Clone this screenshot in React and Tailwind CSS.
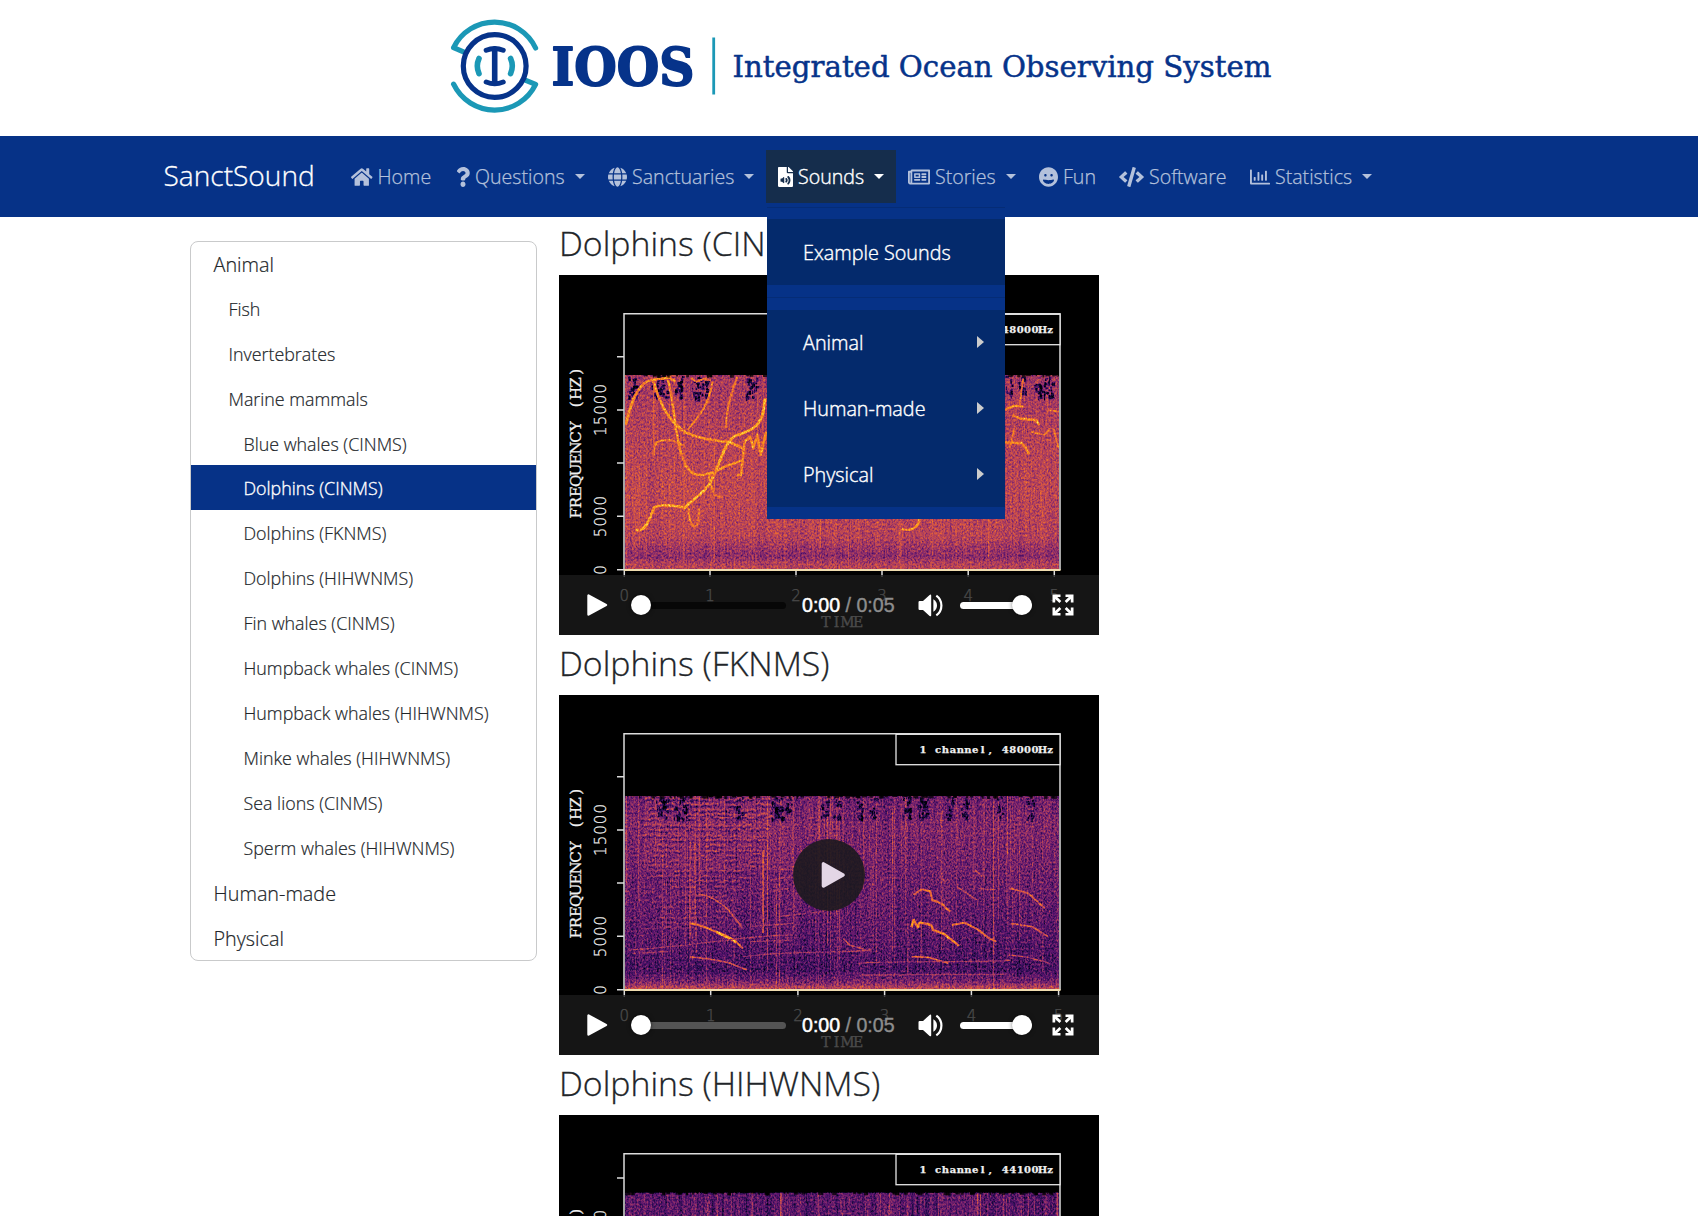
import React from "react";
import {
  FaHome,
  FaQuestion,
  FaGlobe,
  FaFileAudio,
  FaRegNewspaper,
  FaGrin,
  FaCode,
  FaRegChartBar,
} from "react-icons/fa";

const NAV = [
  { label: "Home", Icon: FaHome, width: "w-[105px]", icon: "w-[21.5px] h-[20px]" },
  { label: "Questions", Icon: FaQuestion, width: "w-[152px]", icon: "w-[14px] h-[20px]", caret: true },
  { label: "Sanctuaries", Icon: FaGlobe, width: "w-[170px]", icon: "w-[19px] h-[20px]", caret: true },
  { label: "Sounds", Icon: FaFileAudio, width: "w-[130px]", icon: "w-[15px] h-[20px]", caret: true, active: true },
  { label: "Stories", Icon: FaRegNewspaper, width: "w-[131px]", icon: "w-[22px] h-[20px]", caret: true },
  { label: "Fun", Icon: FaGrin, width: "w-[80px]", icon: "w-[19px] h-[20px]" },
  { label: "Software", Icon: FaCode, width: "w-[131px]", icon: "w-[25px] h-[20px]" },
  { label: "Statistics", Icon: FaRegChartBar, width: "w-[146px]", icon: "w-[20px] h-[20px]", caret: true },
];

const SIDEBAR = [
  ["Animal", 0],
  ["Fish", 1],
  ["Invertebrates", 1],
  ["Marine mammals", 1],
  ["Blue whales (CINMS)", 2],
  ["Dolphins (CINMS)", 2, true],
  ["Dolphins (FKNMS)", 2],
  ["Dolphins (HIHWNMS)", 2],
  ["Fin whales (CINMS)", 2],
  ["Humpback whales (CINMS)", 2],
  ["Humpback whales (HIHWNMS)", 2],
  ["Minke whales (HIHWNMS)", 2],
  ["Sea lions (CINMS)", 2],
  ["Sperm whales (HIHWNMS)", 2],
  ["Human-made", 0],
  ["Physical", 0],
];

const LEVEL = [
  "pl-[22.5px] text-[19.8px]",
  "pl-[37.5px] text-[17.85px]",
  "pl-[52.5px] text-[17.85px]",
];

function Logo() {
  return (
    <svg width="840" height="136" viewBox="440 0 840 136" className="block" fill="none">
      <g stroke="#1b98b6" strokeWidth="5.2" strokeLinecap="round" strokeLinejoin="round">
        <path d="M463.5 51.8L453.6 47.6A45.5 45.5 0 0 1 535.6 48" />
        <path d="M525.8 80.4L535.6 84.4A45.5 45.5 0 0 1 453.6 84.2" />
        <path d="M479 58.5Q475.6 66 479 73.6M510.6 58.5Q514 66 510.6 73.6" strokeWidth="5.6" />
      </g>
      <g stroke="#06338a" strokeLinecap="round">
        <circle cx="494.7" cy="66" r="31.4" strokeWidth="5.2" />
        <path d="M494.7 49V83" strokeWidth="5.6" />
        <path d="M486.2 50.2Q494.7 46.6 503.2 50.2M486.2 82Q494.7 85.6 503.2 82" strokeWidth="5" />
      </g>
      <path d="M713.7 37.5V94.5" stroke="#1b98b6" strokeWidth="2.8" />
      <g fill="#06338a" stroke="#06338a" fontFamily='"DejaVu Serif", serif' strokeLinejoin="round">
        <text x="551.5" y="85.3" fontSize="53" fontWeight="700" strokeWidth="1.8" textLength="143" lengthAdjust="spacingAndGlyphs">IOOS</text>
        <text x="732.5" y="76.7" fontSize="29" strokeWidth="0.5" textLength="539" lengthAdjust="spacingAndGlyphs">Integrated Ocean Observing System</text>
      </g>
    </svg>
  );
}

/* Deterministic pseudo random numbers, so that a plot always looks the same. */
function prng(seed) {
  let s = seed;
  return () => {
    s = (s * 1664525 + 1013904223) % 4294967296;
    return s / 4294967296;
  };
}

const gray = (v) => {
  const c = Math.round(Math.max(0, Math.min(1, v)) * 255);
  return `rgb(${c},${c},${c})`;
};

const WHISTLES_A = [
  ["M212 630C225 570 245 500 285 495L335 487L350 500", 0.77, 8],
  ["M290 500C305 560 330 620 380 652C420 672 460 675 505 682L540 700", 0.78, 8],
  ["M240 945C275 950 280 900 292 878C310 865 350 872 378 878C400 850 440 830 455 790C480 730 490 680 520 662C550 650 580 645 595 600L603 550", 0.83, 8],
  ["M330 495C350 560 350 740 400 775C430 790 460 770 490 755L540 735", 0.77, 7],
  ["M455 500C445 570 420 600 385 645", 0.72, 6],
  ["M290 720C290 680 300 673 340 676L375 692", 0.74, 6],
  ["M525 485C505 540 495 580 492 640M395 490L410 500L430 492L450 496", 0.72, 6],
  ["M388 880C392 950 410 940 415 920L418 880M440 770L460 840L480 845", 0.72, 6],
  ["M525 780L535 780L545 680L560 665L570 700L580 660L590 720L605 650", 0.76, 7],
  ["M1274 585L1300 572L1325 575M1295 600L1320 612L1360 615L1370 630M1274 682L1320 684Q1335 700 1342 718", 0.77, 7],
  ["M1345 650L1385 660L1400 640M1395 585L1425 590M1300 640L1288 700M1325 490L1315 570M1410 640L1424 700", 0.7, 5],
  ["M985 942C1010 950 1030 940 1035 912", 0.8, 7],
  ["M250 760V990M375 500V1040M980 912V1050M835 960V1050M757 912V1000M1228 912V1030M460 640V1040M290 500V730M215 640V1050", 0.6, 3],
];

const WHISTLES_B = [
  ["M392 850C440 858 470 880 500 892S525 915 540 925", 0.7, 6],
  ["M465 876C485 885 510 896 522 908", 0.8, 8],
  ["M392 950L450 958L500 968L552 990M415 762C450 765 480 790 500 810L540 865", 0.58, 5],
  ["M1018 765L1040 748L1065 754L1070 780L1095 790L1120 815", 0.66, 6],
  ["M1012 862L1018 840L1030 862L1035 848L1068 855L1072 870L1100 880L1125 900L1145 918", 0.75, 7],
  ["M1125 855L1160 848L1200 870L1225 892L1250 905", 0.68, 6],
  ["M1290 745L1340 760L1385 805M1290 850L1350 860L1395 890", 0.62, 5],
  ["M1012 950L1060 952L1115 970", 0.68, 5],
  ["M820 895L840 915L885 930M1090 705L1110 730M1185 685L1210 710M1140 740L1195 780M1285 945L1340 952L1400 970M1200 745L1245 750", 0.54, 4],
  ["M597 630V880", 0.6, 5],
  ["M682 470V880M1315 470V900M418 470V760M700 480V800M905 640V930M1215 480V720M1002 850V1020M410 830V940M1187 480V760M1380 880V1000", 0.46, 3],
  ["M220 930C400 920 500 890 680 885M540 950C700 930 800 940 900 930M860 970C1000 960 1200 970 1290 960M870 1005L1275 1003M640 830L760 815L820 790M560 905L680 900M230 940L330 935M560 860L680 850M620 720L680 710M620 750L670 745M640 690L680 688", 0.45, 4],
];

const PLOTS = {
  a: {
    seed: 11, top: 100, ticksY: [81.7, 135, 188, 241.3, 294.7], ticksX: [65.3, 151, 237, 323, 409.2, 495.3],
    stops: [[0, 0.44], [0.25, 0.48], [0.6, 0.51], [0.83, 0.49], [0.93, 0.38], [0.97, 0.48], [1, 0.5]],
    whistles: WHISTLES_A, shift: -60, streak: 0.03, grain: 0.5, comb: 0.16, label: "1 channel, 48000Hz",
    clusters: [72, 75, 95, 100, 105, 119, 122, 136, 140, 146, 190, 194, 450, 462, 478, 484, 487, 490],
  },
  b: {
    seed: 5, top: 101, ticksY: [81.7, 135, 188, 241.3, 294.7], ticksX: [65.3, 151.7, 238.9, 325.6, 412.4, 499.6],
    stops: [[0, 0.31], [0.15, 0.35], [0.5, 0.3], [0.75, 0.26], [0.9, 0.22], [0.96, 0.34], [0.99, 0.5], [1, 0.5]],
    whistles: WHISTLES_B, shift: -55, streak: 0.09, grain: 0.56, comb: 0.18, harmonics: true, label: "1 channel, 48000Hz",
    clusters: [100, 106, 118, 124, 180, 214, 218, 224, 229, 265, 277, 300, 314, 347, 350, 361, 366, 390, 405, 440, 470],
  },
  c: {
    seed: 23, top: 77.5, ticksY: [63, 121], ticksX: [],
    stops: [[0, 0.27], [1, 0.25]],
    whistles: [], shift: -65, streak: 0.1, grain: 0.5, comb: 0.26, clusters: [], label: "1 channel, 44100Hz",
  },
};

/* Text whose glyphs are centred in equal cells, as in a fixed-pitch face. */
function CellText({ x, y, pitch, children, rotate, ...rest }) {
  const xs = [...children].map((_, i) => (i + 0.5) * pitch - (children.length * pitch) / 2);
  return (
    <text x={xs.join(" ")} y="0" textAnchor="middle" transform={`translate(${x} ${y})${rotate ? " rotate(-90)" : ""}`} {...rest}>
      {children}
    </text>
  );
}

function Spectrogram({ id }) {
  const p = PLOTS[id];
  const rnd = prng(p.seed);
  const bottom = 295;
  const bandH = bottom - p.top;
  const streaks = Array.from({ length: 130 }, () => ({
    x: Math.round(66 + rnd() * 433),
    y: p.top + (rnd() < 0.6 ? 0 : rnd() * bandH * 0.6),
    h: bandH * (0.3 + rnd() * 0.7),
    light: rnd() < 0.6,
    o: rnd() * p.streak * 2.4,
  }));
  const patches = p.clusters.flatMap((cx) =>
    Array.from({ length: 11 }, () => ({
      x: cx + (rnd() - 0.5) * 7,
      y: p.top + Math.pow(rnd(), 0.8) * 22,
      w: 1 + rnd() * 2.4,
      h: 1.5 + rnd() * 3.5,
    }))
  );
  const edge = Array.from({ length: 110 }, () => ({ x: 66 + rnd() * 433, y: p.top - 1, w: 1 + rnd() * 4, h: 1 + rnd() * 3 }));
  const waves = p.harmonics
    ? Array.from({ length: 26 }, (_, i) => {
        const y = 104 + i * 5.2;
        const start = 78 + rnd() * 20;
        let d = `M${start} ${y}`;
        for (let x = start; x < 222 - i * 2.5; x += 9) {
          d += rnd() < 0.25 ? `m9 ${rnd() * 2 - 1}` : `q${3 + rnd() * 3} ${-1 - rnd() * 3} 9 ${rnd() - 0.5}`;
        }
        return d;
      })
    : [];
  const digits = { fontFamily: '"DejaVu Sans", sans-serif', fontSize: 15, fill: "#f0f0f0", stroke: "#f0f0f0", strokeWidth: 0.25 };
  const slab = { fontFamily: '"DejaVu Serif", serif', fontSize: 15.2, fill: "#f0f0f0", stroke: "#f0f0f0", strokeWidth: 0.25 };
  return (
    <svg width="540" height="360" viewBox="0 0 540 360" className="block bg-black">
      <defs>
        <linearGradient id={`g-${id}`} x1="0" y1="0" x2="0" y2="1">
          {p.stops.map(([o, v]) => (
            <stop key={o} offset={o} stopColor={gray(v)} />
          ))}
        </linearGradient>
        <filter id={`f-${id}`} filterUnits="userSpaceOnUse" x="66" y={p.top} width="434" height={bandH} colorInterpolationFilters="sRGB">
          <feTurbulence type="fractalNoise" baseFrequency="0.6 0.45" numOctaves="3" seed={p.seed} result="t1" />
          <feColorMatrix in="t1" type="matrix" values="1 0 0 0 0  1 0 0 0 0  1 0 0 0 0  0 0 0 0 1" result="n1" />
          <feTurbulence type="fractalNoise" baseFrequency="0.4 0.006" numOctaves="2" seed={p.seed + 3} result="t2" />
          <feColorMatrix in="t2" type="matrix" values="1 0 0 0 0  1 0 0 0 0  1 0 0 0 0  0 0 0 0 1" result="n2" />
          <feComposite in="SourceGraphic" in2="n1" operator="arithmetic" k1="0" k2="1" k3={p.grain} k4={-p.grain / 2} result="s1" />
          <feComposite in="s1" in2="n2" operator="arithmetic" k1="0" k2="1" k3={p.comb} k4={-p.comb / 2} result="s2" />
          <feComponentTransfer in="s2">
            <feFuncR type="table" tableValues="0 0.12 0.32 0.53 0.73 0.89 0.98 0.98 0.99" />
            <feFuncG type="table" tableValues="0 0.05 0.07 0.17 0.27 0.38 0.56 0.79 1" />
            <feFuncB type="table" tableValues="0.02 0.28 0.42 0.42 0.34 0.22 0.1 0.2 0.64" />
          </feComponentTransfer>
        </filter>
        <clipPath id={`c-${id}`}>
          <rect x="66" y={p.top} width="434" height={bandH} />
        </clipPath>
      </defs>
      <g filter={`url(#f-${id})`}>
        <g clipPath={`url(#c-${id})`}>
          <rect x="66" y={p.top} width="434" height={bandH} fill={`url(#g-${id})`} />
          {p.harmonics && <rect x="85" y={p.top} width="150" height="75" fill="#fff" opacity="0.05" />}
          {streaks.map((s, i) => (
            <rect key={i} x={s.x} y={s.y} width="1" height={s.h} fill={s.light ? "#fff" : "#000"} opacity={s.o} />
          ))}
          {waves.map((d, i) => (
            <g key={i} fill="none" strokeWidth="1.3">
              <path d={d} stroke="#858585" opacity={0.8 - i * 0.015} />
              <path d={d} stroke="#000" opacity={0.4 - i * 0.014} transform="translate(0 2.4)" />
            </g>
          ))}
          {patches.map((s, i) => (
            <rect key={i} x={s.x} y={s.y} width={s.w} height={s.h} fill="#000" opacity="0.75" />
          ))}
          <g transform={`translate(-9 ${p.shift}) scale(0.35714 0.33333)`} fill="none" strokeLinejoin="round">
            {p.whistles.map(([d, v, w]) => (
              <path key={d} d={d} stroke={gray(v)} strokeWidth={w} opacity="0.9" />
            ))}
          </g>
        </g>
      </g>
      {edge.map((s, i) => (
        <rect key={i} x={s.x} y={s.y} width={s.w} height={s.h} fill="#000" opacity="0.75" />
      ))}
      <path d={`M65 ${bottom}V38.7H501V${bottom}`} stroke="#dcdcdc" strokeWidth="1.5" fill="none" />
      <path d="M64.5 295H501.5" stroke="#efdcae" strokeWidth="1.8" />
      <path
        d={p.ticksY.map((y) => `M58 ${y}H65`).join("") + p.ticksX.map((x) => `M${x} 296V302`).join("")}
        stroke="#dcdcdc"
        strokeWidth="1.5"
      />
      <rect x="337" y="39.3" width="164" height="30.4" fill="#000" stroke="#e6e6e6" strokeWidth="1.3" />
      <CellText x={427.5} y={58} pitch={7.47} {...slab} fontSize={10} fontWeight={700}>{p.label}</CellText>
      <CellText x={22.2} y={167.5} pitch={10.9} rotate {...slab}>FREQUENCY (HZ)</CellText>
      <CellText x={47.2} y={id === "c" ? 121 : 135} pitch={10.6} rotate {...digits}>15000</CellText>
      <CellText x={47.2} y={241.5} pitch={10.6} rotate {...digits}>5000</CellText>
      <CellText x={47.2} y={295} pitch={10.6} rotate {...digits}>0</CellText>
      {p.ticksX.map((x, i) => (
        <text key={i} x={x} y="325.5" textAnchor="middle" {...digits}>{i}</text>
      ))}
      <CellText x={283} y={351.5} pitch={10.8} {...slab} fontSize={14}>TIME</CellText>
    </svg>
  );
}

function Controls({ light }) {
  return (
    <div className="absolute bottom-0 left-0 flex h-[60px] w-[540px] items-center bg-[#1b1b1b]/78 pl-[28px]">
      <svg width="21" height="22" viewBox="0 0 21 22" className="shrink-0">
        <path d="M1.5 1.5V20.5L19 11Z" fill="#fff" stroke="#fff" strokeWidth="2.4" strokeLinejoin="round" />
      </svg>
      <div className={`ml-[23px] flex h-[7px] w-[155px] shrink-0 items-center rounded-full ${light ? "bg-[#545454]" : "bg-[#070707]"}`}>
        <div className="h-5 w-5 rounded-full bg-white shadow-[0_0_4px_rgba(0,0,0,0.6)]" />
      </div>
      <div className="ml-4 w-[94px] shrink-0 whitespace-pre pt-px font-['Liberation_Sans',sans-serif] text-[19.6px] leading-none text-[#8d8d8d]">
        <span className="text-white [-webkit-text-stroke:0.5px_white]">0:00</span>
        <span className="[-webkit-text-stroke:0.4px_#8d8d8d]"> / 0:05</span>
      </div>
      <svg width="25" height="23" viewBox="0 0 25 23" className="ml-[22px] shrink-0" fill="none">
        <path d="M0.5 8.2Q0.5 7 1.6 7H5L11.6 0.9Q13.2 0 13.2 1.8V21.2Q13.2 23 11.6 22L5 16H1.6Q0.5 16 0.5 14.8Z" fill="#fff" />
        <path d="M15.4 5.3Q19 7.6 19 11.5T15.4 17.7Z" fill="#fff" />
        <path d="M18.3 1.6Q23.4 5.2 23.4 11.5T18.3 21.4" stroke="#fff" strokeWidth="2.2" />
      </svg>
      <div className="ml-[17px] flex h-[7px] w-[72px] shrink-0 items-center justify-end rounded-full bg-white">
        <div className="h-5 w-5 rounded-full bg-white shadow-[0_0_4px_rgba(0,0,0,0.5)]" />
      </div>
      <svg width="22" height="22" viewBox="0 0 22 22" className="ml-5 shrink-0" fill="#fff">
        {["", "translate(22 0) scale(-1 1)", "translate(0 22) scale(1 -1)", "translate(22 22) scale(-1 -1)"].map((t) => (
          <g key={t} transform={t}>
            <path d="M0.5 0.5H8.5V3H5.2L9.3 7.1L7.4 9L3.2 4.9V8.5H0.5Z" />
          </g>
        ))}
      </svg>
    </div>
  );
}

function Video({ title, id, light, big }) {
  return (
    <section className="h-[420px]">
      <h2 className="flex h-[60px] items-center whitespace-nowrap pb-[3px] text-[33.8px] font-light leading-none [-webkit-text-stroke:0.3px_#212529]">{title}</h2>
      <div className="relative h-[360px] w-[540px] overflow-hidden">
        <Spectrogram id={id} />
        {big && (
          <div className="absolute left-[234px] top-[144px] flex h-[72px] w-[72px] items-center justify-center rounded-full bg-[#1c1a1e]/90">
            <svg width="26" height="28" viewBox="0 0 26 28" className="ml-[8px]">
              <path d="M3.5 3V25L23 14Z" fill="#e3d6e6" stroke="#e3d6e6" strokeWidth="3.6" strokeLinejoin="round" />
            </svg>
          </div>
        )}
        {id !== "c" && <Controls light={light} />}
      </div>
    </section>
  );
}

function Dropdown() {
  return (
    <div className="absolute left-[1px] top-[57px] z-10 h-[312px] w-[238px] border-t border-[#052c76] bg-[#063287] pt-[11px] text-[19.8px] text-white [-webkit-text-stroke:0.4px_white]">
      <div className="flex h-[66px] items-center bg-[#042a6c] pl-9 pt-[2px]">Example Sounds</div>
      <div className="flex h-[25px] items-center">
        <div className="h-px w-full bg-[#052c76]" />
      </div>
      {["Animal", "Human-made", "Physical"].map((t) => (
        <div key={t} className="flex h-[65.67px] items-center justify-between bg-[#042a6c] pl-9 pr-[21px]">
          <span className="pt-px">{t}</span>
          <span className="mt-[-1px] h-0 w-0 border-y-[6.5px] border-l-[7px] border-y-transparent border-l-[#cccccc]" />
        </div>
      ))}
    </div>
  );
}

export default function App() {
  return (
    <div className="h-[1216px] w-[1698px] overflow-hidden bg-white font-['Open_Sans',sans-serif] font-light text-[#212529]">
      <header className="flex h-[136px] pl-[440px]">
        <Logo />
      </header>
      <nav className="flex h-[81px] items-center bg-[#063287] pl-[163.5px]">
        <div className="w-[175.5px] shrink-0 whitespace-nowrap pb-[3px] text-[28.1px] leading-none text-white [-webkit-text-stroke:0.3px_white]">SanctSound</div>
        {NAV.map(({ label, Icon, width, icon, caret, active }) => (
          <div
            key={label}
            className={`relative h-[53px] shrink-0 text-[19.6px] ${width} ${active ? "bg-[#152d4c] text-white [-webkit-text-stroke:0.4px_white]" : "text-[#b4c1db] [-webkit-text-stroke:0.25px_#b4c1db]"}`}
          >
            <div className="flex h-full items-center whitespace-nowrap pl-3">
              <Icon className={`${icon} shrink-0`} preserveAspectRatio="none" />
              <span className="ml-[5px]">{label}</span>
              {caret && (
                <span className="ml-[10px] h-0 w-0 border-x-[5px] border-t-[5px] border-x-transparent border-t-current" />
              )}
            </div>
            {active && <Dropdown />}
          </div>
        ))}
      </nav>
      <main className="flex pl-[190px]">
        <aside className="mt-6 h-[720px] w-[347px] shrink-0 overflow-hidden rounded-[8px] border border-[#c9cacb]">
          {SIDEBAR.map(([label, level, active], i) => (
            <div
              key={label}
              className={`flex items-center whitespace-nowrap ${i === 0 ? "h-[43px]" : "h-[45px]"} ${active ? "bg-[#063287] pt-px text-white [-webkit-text-stroke:0.35px_white]" : i > 0 && i < 5 ? "pt-[3px] [-webkit-text-stroke:0.2px_#212529]" : "pt-[2px] [-webkit-text-stroke:0.2px_#212529]"} ${LEVEL[level]}`}
            >
              {label}
            </div>
          ))}
        </aside>
        <div className="ml-[22px] mt-[-2px] w-[540px] shrink-0">
          <Video title="Dolphins (CINMS)" id="a" />
          <Video title="Dolphins (FKNMS)" id="b" light big />
          <Video title="Dolphins (HIHWNMS)" id="c" />
        </div>
      </main>
    </div>
  );
}
